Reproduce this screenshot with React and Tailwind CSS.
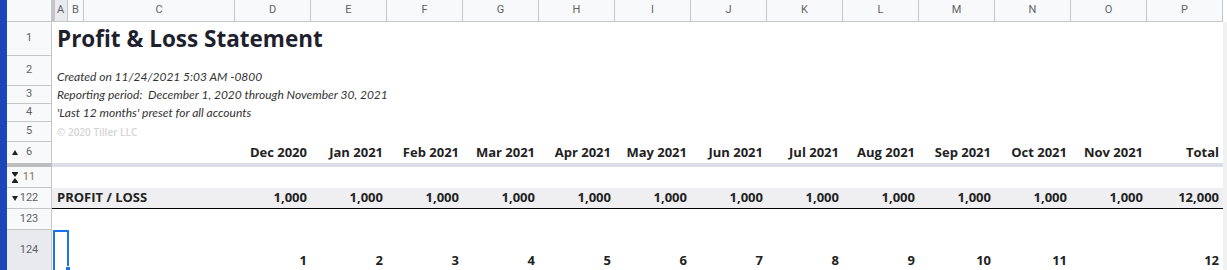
import React from "react";

const letters = "DEFGHIJKLMNOP".split("");
const months = ["Dec 2020","Jan 2021","Feb 2021","Mar 2021","Apr 2021","May 2021","Jun 2021","Jul 2021","Aug 2021","Sep 2021","Oct 2021","Nov 2021","Total"];
const seq = ["1","2","3","4","5","6","7","8","9","10","11","","12"];
const GRID = "grid grid-cols-[16px_16px_151px_repeat(13,76px)]";
const HF = { fontFamily: "Roboto, 'Liberation Sans', sans-serif" };
const CF = { fontFamily: "'Open Sans', 'Liberation Sans', sans-serif" };
const IF = { fontFamily: "Lato, 'Open Sans', sans-serif" };

function RowHead({ h, label, icon, bg = "bg-[#f8f9fa]", color = "text-[#5f6368]", border = true }) {
  return (
    <div
      className={`relative w-[45px] shrink-0 flex items-center justify-center border-r border-[#c4c7c5] ${border ? "border-b" : ""} ${bg} ${color} text-[11px]`}
      style={{ ...HF, height: h }}
    >
      {icon && <div className="absolute left-[5px] top-0 bottom-0 flex items-center">{icon}</div>}
      <span>{label}</span>
    </div>
  );
}

const Up = (
  <svg width="6" height="5" viewBox="0 0 6 5"><path d="M0 5 L3 0 L6 5 Z" fill="#202124" /></svg>
);
const Down = (
  <svg width="6" height="5" viewBox="0 0 6 5"><path d="M0 0 L6 0 L3 5 Z" fill="#202124" /></svg>
);
const Hour = (
  <svg width="6" height="11" viewBox="0 0 6 11"><path d="M0 0 L6 0 L6 1 L3 5 L0 1 Z M0 11 L6 11 L6 10 L3 6 L0 10 Z" fill="#202124" /></svg>
);

export default function App() {
  return (
    <div className="flex w-[1227px] h-[270px] overflow-hidden bg-white">
      <div className="w-[7px] shrink-0 bg-[#1a46b8]" />
      <div className="flex flex-col w-[1220px]">
        {/* column header */}
        <div className="flex h-[22px] shrink-0 text-[11px] text-[#5f6368]" style={HF}>
          <div className="w-[45px] shrink-0 bg-[#f8f9fa] border-r border-b border-[#c4c7c5]" />
          <div className={GRID}>
            <div className="relative flex items-center justify-center bg-[#e8eaed] border-r border-b border-[#c4c7c5]">
              <div className="absolute left-0 top-0 bottom-0 w-[3px] bg-[#c2c4c7]" />
              <span className="pl-[2px]">A</span>
            </div>
            <div className="flex items-center justify-center bg-[#f8f9fa] border-r border-b border-[#c4c7c5]">B</div>
            <div className="flex items-center justify-center bg-[#f8f9fa] border-r border-b border-[#c4c7c5]">C</div>
            {letters.map((l) => (
              <div key={l} className="flex items-center justify-center bg-[#f8f9fa] border-r border-b border-[#c4c7c5]">{l}</div>
            ))}
          </div>
          <div className="w-[4px] bg-white" />
        </div>
        <div className="flex flex-1">
          <div className="flex flex-col w-[1216px]">
            {/* row 1 */}
            <div className="flex">
              <RowHead h={34} label="1" />
              <div className="flex-1 flex items-center pl-[5px] text-[22.5px] font-bold text-[#1f1f2e] leading-[28px]" style={CF}>
                Profit &amp; Loss Statement
              </div>
            </div>
            {/* row 2 */}
            <div className="flex">
              <RowHead h={30} label="2" />
              <div className="flex-1 flex items-end pb-[1px] pl-[5px] text-[12px] italic text-[#333] leading-[16px]" style={IF}>
                Created on 11/24/2021 5:03 AM -0800
              </div>
            </div>
            {/* row 3 */}
            <div className="flex">
              <RowHead h={18} label="3" />
              <div className="flex-1 flex items-center pl-[5px] text-[12px] italic text-[#333] leading-[16px] whitespace-pre" style={IF}>
                {"Reporting period:  December 1, 2020 through November 30, 2021"}
              </div>
            </div>
            {/* row 4 */}
            <div className="flex">
              <RowHead h={18} label="4" />
              <div className="flex-1 flex items-center pl-[5px] text-[12px] italic text-[#333] leading-[16px]" style={IF}>
                'Last 12 months' preset for all accounts
              </div>
            </div>
            {/* row 5 */}
            <div className="flex">
              <RowHead h={20} label="5" />
              <div className="flex-1 flex items-center pl-[5px] text-[10px] font-semibold text-[#d4d4d4] leading-[14px]" style={CF}>
                © 2020 Tiller LLC
              </div>
            </div>
            {/* row 6 */}
            <div className="flex">
              <RowHead h={21} label="6" icon={Up} border={false} />
              <div className={`${GRID} h-[21px] text-[13px] font-bold text-[#222] items-center`} style={CF}>
                <div /><div /><div />
                {months.map((m) => (
                  <div key={m} className="text-right pr-[4px] whitespace-nowrap">{m}</div>
                ))}
              </div>
            </div>
            {/* freeze bar */}
            <div className="flex h-[4px]">
              <div className="w-[45px] shrink-0 bg-[#bdbdbd]" />
              <div className="flex-1 bg-[#d9dde7]" />
            </div>
            {/* row 11 */}
            <div className="flex">
              <RowHead h={21} label="11" icon={Hour} color="text-[#8a7358]" />
              <div className="flex-1" />
            </div>
            {/* row 122 */}
            <div className="flex">
              <RowHead h={21} label="122" icon={Down} />
              <div className={`${GRID} h-[21px] bg-[#efeff2] border-b border-black text-[13px] font-bold text-[#222] items-center`} style={CF}>
                <div className="col-span-3 pl-[5px] whitespace-nowrap">PROFIT / LOSS</div>
                {months.map((m, i) => (
                  <div key={m} className="text-right pr-[4px]">{i === 12 ? "12,000" : "1,000"}</div>
                ))}
              </div>
            </div>
            {/* row 123 */}
            <div className="flex">
              <RowHead h={21} label="123" />
              <div className="flex-1" />
            </div>
            {/* row 124 */}
            <div className="flex">
              <RowHead h={41} label="124" bg="bg-[#e8eaed]" />
              <div className={`${GRID} h-[41px] text-[13px] font-bold text-[#222] items-end`} style={CF}>
                <div className="relative h-full">
                  <div className="absolute left-[1px] top-0 w-[16px] h-[42px] border-2 border-[#1a73e8]" />
                  <div className="absolute left-[13px] top-[36px] w-[6px] h-[6px] bg-[#1a73e8] border border-white" />
                </div>
                <div /><div />
                {seq.map((n, i) => (
                  <div key={i} className="text-right pr-[4px] pb-[2px] leading-[18px]">{n}</div>
                ))}
              </div>
            </div>
          </div>
          <div className="w-[4px] bg-[#f1f1f1]" />
        </div>
      </div>
    </div>
  );
}
